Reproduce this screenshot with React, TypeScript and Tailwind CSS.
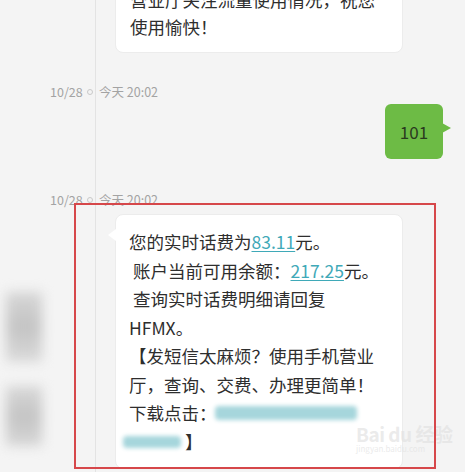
import type { ReactNode } from "react";

function Stamp() {
  return (
    <div className="flex items-center h-4 text-[12.5px] text-[#a3a3a3] ml-[50px]">
      <span className="w-[37px]">10/28</span>
      <span className="w-[6px] h-[6px] rounded-full border border-[#c9c9c9] bg-[#f4f4f4] relative z-10" />
      <span className="ml-[6px]">今天 20:02</span>
    </div>
  );
}

function Money({ children }: { children: ReactNode }) {
  return <span className="text-[#3fa9b8] underline underline-offset-2 decoration-1">{children}</span>;
}

export default function App() {
  return (
    <div
      className="relative w-[465px] h-[472px] overflow-hidden bg-[#f4f4f4] text-[#2e2e2e]"
      style={{ fontFamily: '"Noto Sans CJK SC", "Noto Sans", sans-serif' }}
    >
      {/* timeline line */}
      <div className="absolute left-[95px] top-0 bottom-0 w-px bg-[#e3e3e3]" />

      {/* blurred side strips */}
      <div className="absolute left-[6px] top-[292px] w-[36px] h-[70px] bg-gradient-to-b from-[#d6d6d6] via-[#c4c4c4] to-[#dadada] blur-[6px]" />
      <div className="absolute left-[6px] top-[386px] w-[36px] h-[60px] bg-gradient-to-b from-[#d8d8d8] via-[#c4c4c4] to-[#d6d6d6] blur-[6px]" />

      <div className="flex flex-col">
        {/* previous message, cut off */}
        <div className="ml-[115px] w-[288px] -mt-[27px] rounded-lg bg-white border border-[#ececec] px-[14px] pt-[12px] pb-[12px] text-[17.5px] leading-[27px]">
          <div>营业厅关注流量使用情况，祝您</div>
          <div>使用愉快！</div>
        </div>

        <div className="mt-[31px]">
          <Stamp />
        </div>

        {/* sent */}
        <div className="flex justify-end mt-[4px] pr-[22px]">
          <div className="relative w-[58px] h-[55px] rounded-md bg-[#6dbb45] flex items-center justify-center text-[17px] text-[#2a3a1f]">
            101
            <span className="absolute -right-[8px] top-[19px] w-0 h-0 border-t-[5px] border-b-[5px] border-l-[9px] border-t-transparent border-b-transparent border-l-[#6dbb45]" />
          </div>
        </div>

        <div className="mt-[33px]">
          <Stamp />
        </div>

        {/* received */}
        <div className="relative ml-[115px] mt-[6px] w-[288px] rounded-lg bg-white border border-[#ececec] pl-[13px] pr-[10px] pt-[13px] pb-[12px] text-[17.5px] leading-[28.5px]">
          <span className="absolute -left-[8px] top-[14px] w-0 h-0 border-t-[6px] border-b-[6px] border-r-[8px] border-t-transparent border-b-transparent border-r-white" />
          <div>
            您的实时话费为<Money>83.11</Money>元。
          </div>
          <div className="pl-[4px]">
            账户当前可用余额：<Money>217.25</Money>元。
          </div>
          <div className="pl-[4px]">查询实时话费明细请回复</div>
          <div>HFMX。</div>
          <div>【发短信太麻烦？使用手机营业</div>
          <div>厅，查询、交费、办理更简单！</div>
          <div className="flex items-center">
            <span>下载点击：</span>
            <span className="-ml-[2px] w-[142px] h-[14px] rounded bg-[#a6d6dc] blur-[2px]" />
          </div>
          <div className="flex items-center">
            <span className="-ml-[6px] w-[58px] h-[12px] rounded bg-[#a6d6dc] blur-[2px]" />
            <span className="ml-[4px]">】</span>
          </div>
        </div>
      </div>

      {/* watermark */}
      <div className="absolute left-[356px] top-[424px] text-[#e2e2e2]/70 leading-none pointer-events-none">
        <div className="text-[19px] font-bold tracking-tight">Bai du 经验</div>
        <div className="text-[8px] mt-[2px]">jingyan.baidu.com</div>
      </div>

      {/* annotation box */}
      <div className="absolute left-[74px] top-[203px] w-[362px] h-[266px] border-2 border-[#d6474a]" />
    </div>
  );
}
